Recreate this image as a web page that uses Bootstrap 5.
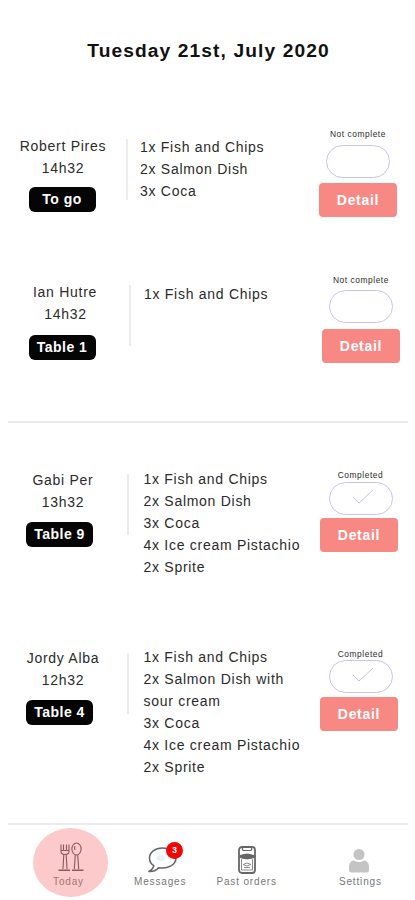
<!DOCTYPE html>
<html lang="en">
<head>
<meta charset="utf-8">
<meta name="viewport" content="width=device-width, initial-scale=1">
<title>Orders</title>
<link href="https://cdn.jsdelivr.net/npm/bootstrap@5.3.0/dist/css/bootstrap.min.css" rel="stylesheet">
<style>
body{font-family:"Liberation Sans",Arial,sans-serif;background:#fff;color:#2b2b2b;height:900px;overflow:hidden}
.screen{width:415px;height:900px}
.day-title{font-size:19.2px;font-weight:700;letter-spacing:1.1px;line-height:24px;color:#111;padding:39px 0 0 2px;height:124px}
.ticket{font-size:14px;letter-spacing:.72px;line-height:22.1px}
.ticket-a{height:147px;--who-x:13px;--who-y:11px;--tag-x:-2px;--tag-y:8px;--rule-x:13px;--rule-y:15px;--list-x:12px;--list-y:12px;--act-y:4px;--act-r:18px;--pill-y:5px;--btn-y:5px;--pill-x:0px}
.ticket-b{height:150px;--who-x:15px;--who-y:10px;--time-x:1px;--tag-x:-6px;--tag-y:10px;--rule-x:14px;--rule-y:14px;--list-x:13px;--list-y:12px;--act-y:3px;--act-r:15px;--pill-y:4px;--btn-y:6px;--pill-x:0px}
.ticket-c{height:179px;--who-x:13px;--who-y:46px;--tag-x:-7px;--tag-y:9px;--rule-x:14px;--rule-y:51px;--list-x:14.5px;--list-y:45px;--act-y:46px;--act-r:17px;--pill-y:1px;--btn-y:3px;--pill-x:3px}
.ticket-d{height:221px;--who-x:13px;--who-y:45px;--tag-x:-7px;--tag-y:9px;--rule-x:14px;--rule-y:51px;--list-x:14.5px;--list-y:44px;--act-y:46px;--act-r:17px;--pill-y:0px;--btn-y:4px;--pill-x:3px}
.who,.rule,.dishes,.act{flex:none}
.who{width:100px;margin-left:var(--who-x);padding-top:var(--who-y)}
.who-time{padding-left:var(--time-x,0px)}
.tag{width:67px;height:25px;line-height:24px;border-radius:6px;background:#050505;color:#fff;font-weight:700;letter-spacing:.5px;margin:var(--tag-y) 0 0 var(--tag-x)}
.rule{width:2px;height:61px;background:#ececec;margin:var(--rule-y) 0 0 var(--rule-x)}
.dishes{margin:0 0 0 var(--list-x);padding-top:var(--list-y);width:165px;white-space:nowrap}
.act{width:78px;padding-top:var(--act-y);margin:0 var(--act-r) 0 auto}
.state-label{font-size:8.4px;line-height:12px;letter-spacing:.55px;margin-left:var(--pill-x);white-space:nowrap}
.state-pill{width:64px;height:33px;border:1px solid #c9c1fa;border-radius:17px;margin:var(--pill-y) 0 0 var(--pill-x)}
.btn-detail{width:78px;height:34px;border:0;border-radius:4px;background:#f88884;color:#fff;font-weight:700;font-size:14px;letter-spacing:.7px;padding:0;line-height:32px;margin-top:var(--btn-y)}
.btn-detail:hover{background:#f27975;color:#fff}
.hline{height:2px;margin:0 7px 0 8px;background:#ebebeb;flex:none}
.bottom-bar{height:75px;padding-left:32px}
.tab{font-size:10px;line-height:12px;letter-spacing:.85px;color:#777;text-decoration:none;white-space:nowrap;flex:none}
.tab-today{width:75px;height:69px;border-radius:50%;background:#fccaca;margin:3px 0 0 .5px;color:#a07475;padding:14px 3px 0 0}
.tab-today svg{margin:0 2px 4px 6px}
.tab-messages{margin:21px 0 0 26.5px}
.tab-messages svg{margin:1px 0 3px 4px}
.tab-past{margin:20px 0 0 30px}
.tab-past svg{margin:1px 0 2px}
.tab-settings{margin:24px 0 0 62px}
.tab-settings svg{margin:0 3px 3px 0}
.count{left:32px;top:-4px;width:17px;height:17px;border-radius:50%;background:#f20505;color:#fff;font-size:9px;font-weight:700;line-height:17px;letter-spacing:0}
</style>
<script src="https://cdn.jsdelivr.net/npm/bootstrap@5.3.0/dist/js/bootstrap.bundle.min.js"></script>
</head>
<body>
<main class="screen d-flex flex-column">
<h1 class="day-title text-center m-0">Tuesday 21st, July 2020</h1>

<section class="ticket ticket-a d-flex">
  <div class="who text-center d-flex flex-column align-items-center"><div>Robert Pires</div><div class="who-time">14h32</div><div class="tag">To go</div></div>
  <div class="rule"></div>
  <ul class="dishes list-unstyled"><li>1x Fish and Chips</li><li>2x Salmon Dish</li><li>3x Coca</li></ul>
  <div class="act d-flex flex-column align-items-center"><div class="state-label">Not complete</div><div class="state-pill"></div><button class="btn btn-detail">Detail</button></div>
</section>

<section class="ticket ticket-b d-flex">
  <div class="who text-center d-flex flex-column align-items-center"><div>Ian Hutre</div><div class="who-time">14h32</div><div class="tag">Table 1</div></div>
  <div class="rule"></div>
  <ul class="dishes list-unstyled"><li>1x Fish and Chips</li></ul>
  <div class="act d-flex flex-column align-items-center"><div class="state-label">Not complete</div><div class="state-pill"></div><button class="btn btn-detail">Detail</button></div>
</section>

<div class="hline"></div>

<section class="ticket ticket-c d-flex">
  <div class="who text-center d-flex flex-column align-items-center"><div>Gabi Per</div><div class="who-time">13h32</div><div class="tag">Table 9</div></div>
  <div class="rule"></div>
  <ul class="dishes list-unstyled"><li>1x Fish and Chips</li><li>2x Salmon Dish</li><li>3x Coca</li><li>4x Ice cream Pistachio</li><li>2x Sprite</li></ul>
  <div class="act d-flex flex-column align-items-center"><div class="state-label">Completed</div><div class="state-pill d-flex justify-content-center align-items-center"><svg class="ms-1 mb-1" width="22" height="16" viewBox="0 0 22 16" fill="none" stroke="#c5bdf3"><path d="M1 8l6 6L21 1"/></svg></div><button class="btn btn-detail">Detail</button></div>
</section>

<section class="ticket ticket-d d-flex">
  <div class="who text-center d-flex flex-column align-items-center"><div>Jordy Alba</div><div class="who-time">12h32</div><div class="tag">Table 4</div></div>
  <div class="rule"></div>
  <ul class="dishes list-unstyled"><li>1x Fish and Chips</li><li>2x Salmon Dish with<br>sour cream</li><li>3x Coca</li><li>4x Ice cream Pistachio</li><li>2x Sprite</li></ul>
  <div class="act d-flex flex-column align-items-center"><div class="state-label">Completed</div><div class="state-pill d-flex justify-content-center align-items-center"><svg class="ms-1 mb-1" width="22" height="16" viewBox="0 0 22 16" fill="none" stroke="#c5bdf3"><path d="M1 8l6 6L21 1"/></svg></div><button class="btn btn-detail">Detail</button></div>
</section>

<div class="hline"></div>

<nav class="bottom-bar d-flex align-items-start">
  <a class="tab tab-today d-flex flex-column align-items-center" href="#">
    <svg width="26" height="30" viewBox="0 0 26 30" fill="none" stroke="#875b5e" stroke-width="1.1"><path d="M3 2.500v7q0 3 4 3t4-3v-7M5.500 2.500v6M8.500 2.500v6M3 8.500h8"/><path d="M5.800 12L5 27M8.200 12L9 27"/><ellipse cx="18.500" cy="7" rx="4.600" ry="6"/><path d="M17.300 13L16.300 27M19.700 13L20.700 27M17 4q-1 2 0 4"/><path d="M.5 28.300H12M14 28.300H25.500" stroke-width="1.500"/></svg>
    <span>Today</span>
  </a>
  <a class="tab tab-messages d-flex flex-column align-items-center position-relative" href="#">
    <svg width="29" height="26" viewBox="0 0 29 26" fill="#fff" stroke="#626769" stroke-width="1.500" stroke-linejoin="round"><path d="M14.500 1C7 1 1.500 5.300 1.500 11c0 3.200 1.700 6 4.300 7.700C5.500 21.300 3.500 23 1 24.500c4 .3 7.300-.8 9.500-3.700 10 1.500 17.500-3.300 17.500-9.800C28 5.300 22 1 14.500 1z"/><ellipse cx="13" cy="11" rx="5" ry="3" fill="#e9f3f3" stroke="none"/></svg>
    <span>Messages</span>
    <span class="count position-absolute text-center">3</span>
  </a>
  <a class="tab tab-past d-flex flex-column align-items-center" href="#">
    <svg width="18" height="28" viewBox="0 0 18 28" fill="none" stroke="#666"><rect x="1" y="1" width="16" height="26" rx="3" fill="#fff" stroke-width="1.800"/><path d="M4.500 2v1.500q0 1 1 1h7q1 0 1-1V2" stroke-width="1.200"/><path d="M2 9.500q7-3 14 0v2q-7 3-14 0z" fill="#666"/><path d="M3.500 13v11h11V13M5 18.500q4-3 8 0q-4 3-8 0zM6 21.500h6" stroke="#8c8c8c"/></svg>
    <span>Past orders</span>
  </a>
  <a class="tab tab-settings d-flex flex-column align-items-center" href="#">
    <svg width="20" height="24" viewBox="0 0 20 24" fill="#c4c4c4"><circle cx="10" cy="5.500" r="5.500"/><path d="M0 18q0-6 5-6.500 5 3 10 0 5 .5 5 6.500v3q0 2.500-2.500 2.500h-15Q0 23.500 0 21z"/></svg>
    <span>Settings</span>
  </a>
</nav>
</main>
</body>
</html>
